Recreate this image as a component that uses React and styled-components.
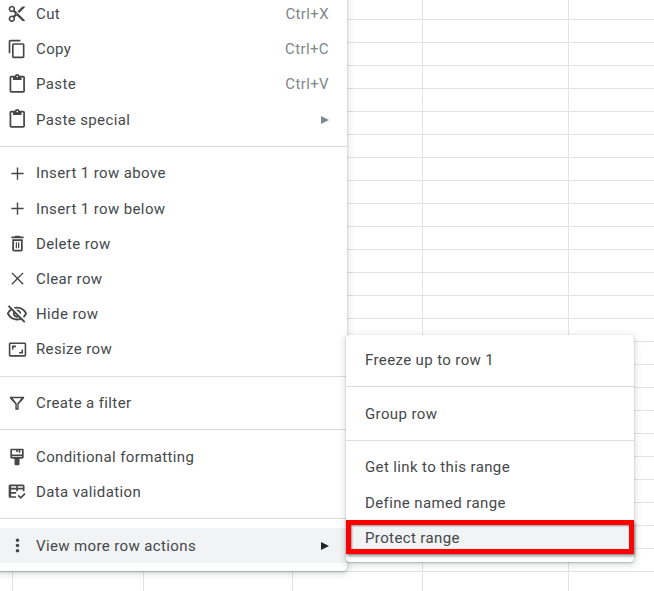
import React from "react";
import styled, { createGlobalStyle } from "styled-components";

const GlobalStyle = createGlobalStyle`
  html, body {
    margin: 0;
    padding: 0;
    background: #ffffff;
    overflow: hidden;
  }
`;

const mainMenu = [
  [
    { label: "Cut", icon: "cut", size: 19.5, shortcut: "Ctrl+X" },
    { label: "Copy", icon: "copy", size: 20, shortcut: "Ctrl+C" },
    { label: "Paste", icon: "paste", size: 20.5, shortcut: "Ctrl+V" },
    { label: "Paste special", icon: "paste", size: 20.5, arrow: true },
  ],
  [
    { label: "Insert 1 row above", icon: "add", size: 21 },
    { label: "Insert 1 row below", icon: "add", size: 21 },
    { label: "Delete row", icon: "trash", size: 21 },
    { label: "Clear row", icon: "close", size: 21 },
    { label: "Hide row", icon: "hide", size: 22 },
    { label: "Resize row", icon: "resize", size: 19 },
  ],
  [{ label: "Create a filter", icon: "filter", size: 20 }],
  [
    { label: "Conditional formatting", icon: "paint", size: 20 },
    { label: "Data validation", icon: "validate", size: 20 },
  ],
  [{ label: "View more row actions", icon: "more", size: 21, arrow: true, active: true }],
];

const subMenu = [
  [{ label: "Freeze up to row 1" }],
  [{ label: "Group row" }],
  [
    { label: "Get link to this range" },
    { label: "Define named range" },
    { label: "Protect range", active: true, marked: true },
  ],
];

const icons = {
  cut: <path d="M9.64 7.64c.23-.5.36-1.05.36-1.64 0-2.21-1.79-4-4-4S2 3.79 2 6s1.79 4 4 4c.59 0 1.14-.13 1.64-.36L10 12l-2.36 2.36C7.14 14.13 6.59 14 6 14c-2.21 0-4 1.79-4 4s1.79 4 4 4 4-1.79 4-4c0-.59-.13-1.14-.36-1.64L12 14l7 7h3v-1L9.64 7.64zM6 8c-1.1 0-2-.89-2-2s.9-2 2-2 2 .89 2 2-.9 2-2 2zm0 12c-1.1 0-2-.89-2-2s.9-2 2-2 2 .89 2 2-.9 2-2 2zm6-7.5c-.28 0-.5-.22-.5-.5s.22-.5.5-.5.5.22.5.5-.22.5-.5.5zM19 3l-6 6 2 2 7-7V3z" />,
  copy: <path d="M16 1H4c-1.1 0-2 .9-2 2v14h2V3h12V1zm3 4H8c-1.1 0-2 .9-2 2v14c0 1.1.9 2 2 2h11c1.1 0 2-.9 2-2V7c0-1.1-.9-2-2-2zm0 16H8V7h11v14z" />,
  paste: <path d="M19 2h-4.18C14.4.84 13.3 0 12 0c-1.3 0-2.4.84-2.82 2H5c-1.1 0-2 .9-2 2v16c0 1.1.9 2 2 2h14c1.1 0 2-.9 2-2V4c0-1.1-.9-2-2-2zm-7 0c.55 0 1 .45 1 1s-.45 1-1 1-1-.45-1-1 .45-1 1-1zm7 18H5V4h2v3h10V4h2v16z" />,
  add: <path d="M19 12.8h-6.2V19h-1.6v-6.2H5v-1.6h6.2V5h1.6v6.2H19z" />,
  trash: <path d="M6 19c0 1.1.9 2 2 2h8c1.1 0 2-.9 2-2V7H6v12zM8 9h8v10H8V9zm7.5-5l-1-1h-5l-1 1H5v2h14V4h-3.5zM10 10.5h1.4v7H10zm2.6 0H14v7h-1.4z" />,
  close: <path d="M19 6.1L17.9 5 12 10.9 6.1 5 5 6.1 10.9 12 5 17.9 6.1 19 12 13.1 17.9 19 19 17.9 13.1 12z" />,
  hide: <path d="M12 6c3.79 0 7.17 2.13 8.82 5.5-.59 1.22-1.42 2.27-2.41 3.12l1.41 1.41c1.39-1.23 2.49-2.77 3.18-4.53C21.27 7.11 17 4 12 4c-1.27 0-2.49.2-3.64.57l1.65 1.65C10.66 6.09 11.32 6 12 6zm-1.07 1.14L13 9.21c.57.25 1.03.71 1.28 1.28l2.07 2.07c.08-.34.14-.7.14-1.07C16.5 9.01 14.48 7 12 7c-.37 0-.72.05-1.07.14zM2.01 3.87l2.68 2.68C3.06 7.83 1.77 9.53 1 11.5 2.73 15.89 7 19 12 19c1.52 0 2.98-.29 4.32-.82l3.42 3.42 1.41-1.41L3.42 2.45 2.01 3.87zm7.5 7.5l2.61 2.61c-.04.01-.08.02-.12.02-1.38 0-2.5-1.12-2.5-2.5 0-.05.01-.08.01-.13zm-3.4-3.4l1.75 1.75c-.23.55-.36 1.15-.36 1.78 0 2.48 2.02 4.5 4.5 4.5.63 0 1.23-.13 1.77-.36l.98.98c-.88.24-1.8.38-2.75.38-3.79 0-7.17-2.13-8.82-5.5.7-1.43 1.72-2.61 2.93-3.53z" />,
  resize: <path d="M19 12h-2v3h-3v2h5v-5zM7 9h3V7H5v5h2V9zm14-6H3c-1.1 0-2 .9-2 2v14c0 1.1.9 2 2 2h18c1.1 0 2-.9 2-2V5c0-1.1-.9-2-2-2zm0 16H3V5h18v14z" />,
  filter: <path fillRule="evenodd" d="M3.5 4.5h17v1.8L14 13.5V20h-4v-6.5L3.5 6.300V4.500zm3.300 1.800l4.900 6.300v5.700h.6v-5.700l4.900-6.300H6.800z" />,
  paint: <path d="M5 2h14c.6 0 1 .4 1 1v9c0 1.1-.9 2-2 2h-3v6c0 1.1-.9 2-2 2h-2c-1.1 0-2-.9-2-2v-6H6c-1.1 0-2-.9-2-2V3c0-.6.4-1 1-1zm1 2v5h12V4h-2v3h-2V4h-1v2h-2V4H6zm0 7v1h12v-1H6z" />,
  validate: <path d="M4 3h15c1.1 0 2 .9 2 2v6h-2V9h-6v2h-2V9H5v3h6v2H5v3h6v2H4c-1.1 0-2-.9-2-2V5c0-1.1.9-2 2-2zm1 2v2h6V5H5zm8 0v2h6V5h-6zm9.300 9.700l-5.800 5.800-3.800-3.800 1.400-1.400 2.400 2.400 4.400-4.400 1.400 1.400z" />,
  more: <path d="M12 8c1.1 0 2-.9 2-2s-.9-2-2-2-2 .9-2 2 .9 2 2 2zm0 2c-1.1 0-2 .9-2 2s.9 2 2 2 2-.9 2-2-.9-2-2-2zm0 6c-1.1 0-2 .9-2 2s.9 2 2 2 2-.9 2-2-.9-2-2-2z" />,
};

const MenuGroups = ({ groups, withIcons }) =>
  groups.map((group, i) => (
    <React.Fragment key={i}>
      {i > 0 && <Separator />}
      {group.map((item) => (
        <Row key={item.label} $active={item.active} $marked={item.marked} $withIcons={withIcons}>
          {withIcons && (
            <Icon viewBox="0 0 24 24" $size={item.size}>
              {icons[item.icon]}
            </Icon>
          )}
          <Label>{item.label}</Label>
          {item.shortcut && <Shortcut>{item.shortcut}</Shortcut>}
          {item.arrow && <Arrow $active={item.active} />}
        </Row>
      ))}
    </React.Fragment>
  ));

export default function App() {
  return (
    <>
      <GlobalStyle />
      <Sheet>
        <MainMenu>
          <MenuGroups groups={mainMenu} withIcons />
        </MainMenu>
        <SubMenu>
          <MenuGroups groups={subMenu} />
        </SubMenu>
      </Sheet>
    </>
  );
}

const gridLine = (x) => `linear-gradient(#e2e3e3, #e2e3e3) ${x}px 0 / 1px 100% no-repeat`;

const Sheet = styled.div`
  position: relative;
  width: 654px;
  height: 591px;
  overflow: hidden;
  background:
    ${gridLine(12)},
    ${gridLine(143)},
    ${gridLine(292)},
    ${gridLine(422)},
    ${gridLine(568)},
    repeating-linear-gradient(#ffffff 0, #ffffff 22px, #e2e3e3 22px, #e2e3e3 23px) 0 -3px;
`;

const Menu = styled.div`
  position: absolute;
  box-sizing: border-box;
  background: #ffffff;
  border-radius: 4px;
  box-shadow: 0 2px 6px 2px rgba(60, 64, 67, 0.15), 0 1px 2px rgba(60, 64, 67, 0.3);
`;

const MainMenu = styled(Menu)`
  left: -4px;
  top: -11.6px;
  width: 351px;
  padding: 8px 0;
`;

const SubMenu = styled(Menu)`
  left: 346px;
  top: 335px;
  width: 288px;
  padding: 7.3px 0 6.7px;
`;

const Row = styled.div`
  position: relative;
  display: flex;
  align-items: center;
  height: 35.2px;
  box-sizing: border-box;
  padding: ${(p) => (p.$withIcons ? "0 18px 0 12px" : "0 18px 0 19px")};
  background: ${(p) => (p.$active ? "#f1f3f4" : "transparent")};
  color: #45484b;

  ${(p) =>
    p.$marked &&
    `
    &::after {
      content: "";
      position: absolute;
      left: 0;
      right: 0;
      top: -0.3px;
      bottom: 1.5px;
      border: 5px solid #fe0000;
      box-shadow: 1px 2px 3px rgba(0, 0, 0, 0.45), inset 1px 1px 2px rgba(0, 0, 0, 0.4);
    }
  `}
`;

const Icon = styled.svg`
  flex: none;
  width: ${(p) => p.$size}px;
  height: ${(p) => p.$size}px;
  margin-left: ${(p) => (18 - p.$size) / 2}px;
  margin-right: ${(p) => (18 - p.$size) / 2 + 10}px;
  fill: #444746;
`;

const Label = styled.span`
  flex: 1;
  font-family: Roboto, "Liberation Sans", sans-serif;
  font-size: 15px;
  letter-spacing: 0.38px;
  white-space: nowrap;
`;

const Shortcut = styled.span`
  font-family: Roboto, "Liberation Sans", sans-serif;
  font-size: 15px;
  letter-spacing: 0.38px;
  color: #80868b;
`;

const Arrow = styled.span`
  width: 0;
  height: 0;
  border-style: solid;
  border-width: 4px 0 4px 8px;
  border-color: transparent transparent transparent ${(p) => (p.$active ? "#202124" : "#80868b")};
`;

const Separator = styled.div`
  height: 1px;
  margin: 8.8px 0;
  background: #dadce0;
`;
